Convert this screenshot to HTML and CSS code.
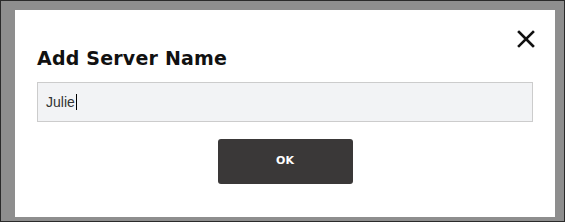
FILE: index.html
```html
<!DOCTYPE html>
<html lang="en">
<head>
    <meta charset="UTF-8">
    <meta name="viewport" content="width=device-width, initial-scale=1.0">
    <title>Add Server Name</title>
    <link rel="stylesheet" href="styles.css">
</head>
<body>

    <div class="backdrop">
        <div class="modal">
            <button class="close" aria-label="Close">
                <svg width="18" height="18" viewBox="0 0 18 18">
                    <path d="M2 2 L16 16 M16 2 L2 16" stroke="#111" stroke-width="2.6" stroke-linecap="square"/>
                </svg>
            </button>
            <h2>Add Server Name</h2>
            <div class="field">
                <span class="value">Julie</span><span class="caret"></span>
            </div>
            <div class="actions">
                <button class="ok">OK</button>
            </div>
        </div>
    </div>

</body>
</html>
```

FILE: styles.css
```css
* {
    margin: 0;
    padding: 0;
    box-sizing: border-box;
}

html, body {
    width: 565px;
    height: 222px;
}

body {
    background-color: #8e8e8e;
    border: 1px solid #2a2a2a;
    overflow: hidden;
}

.backdrop {
    padding: 9px 9px 0 14px;
}

.modal {
    position: relative;
    background-color: #fff;
    width: 540px;
    height: 207px;
    padding: 37px 22px 0 22px;
}

.close {
    position: absolute;
    top: 20px;
    right: 20px;
    background: none;
    border: none;
    cursor: pointer;
    line-height: 0;
}

h2 {
    font-family: "DejaVu Sans", sans-serif;
    font-weight: bold;
    font-size: 19px;
    color: #111;
    letter-spacing: 0.2px;
    height: 35px;
}

.field {
    display: flex;
    align-items: center;
    height: 40px;
    width: 496px;
    padding: 0 8px;
    background-color: #f2f3f5;
    border: 1px solid #cccccc;
    font-family: "Liberation Sans", Arial, sans-serif;
    font-size: 14px;
    color: #333;
}

.caret {
    display: inline-block;
    width: 1px;
    height: 16px;
    margin-left: 1px;
    background-color: #000;
}

.actions {
    display: flex;
    justify-content: center;
    width: 496px;
    margin-top: 17px;
}

.ok {
    width: 135px;
    height: 45px;
    background-color: #3a3838;
    color: #fff;
    border: none;
    border-radius: 3px;
    font-family: "DejaVu Sans", sans-serif;
    font-weight: bold;
    font-size: 11px;
    padding-bottom: 2px;
    cursor: pointer;
}
```
